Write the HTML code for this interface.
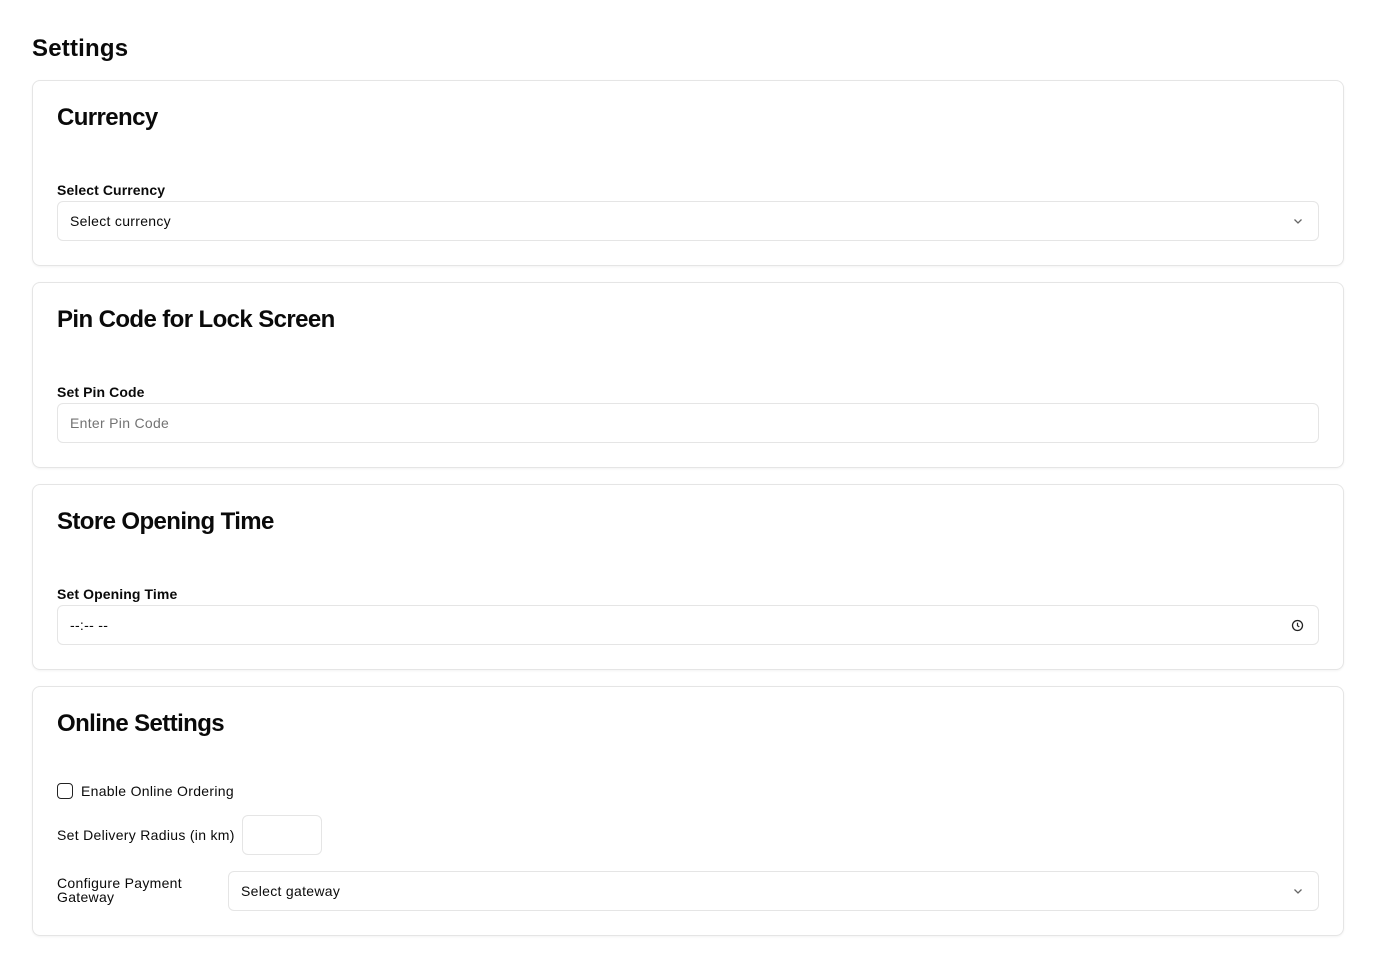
<!DOCTYPE html>
<html><head><style>
*{box-sizing:border-box;margin:0;padding:0}
body{width:1376px;height:968px;background:#fff;font-family:"Liberation Sans",Arial,sans-serif;color:#0a0a0a;position:relative;overflow:hidden}
.a{position:absolute}
h1{position:absolute;left:32px;top:35px;font-size:24px;font-weight:700;letter-spacing:0.2px}
.card{position:absolute;left:32px;width:1312px;border:1px solid #e5e5e5;border-radius:8px;box-shadow:0 1px 2px rgba(0,0,0,.05)}
.card h2{position:absolute;left:24px;top:23px;font-size:24px;font-weight:700;letter-spacing:-0.6px}
.lab{position:absolute;left:24px;font-size:14px;font-weight:600;letter-spacing:0.1px}
.inp{position:absolute;left:24px;width:1262px;height:40px;border:1px solid #e5e5e5;border-radius:6px;font-size:14px;padding:0 12px;line-height:38px;letter-spacing:0.3px}
.ph{color:#737373}
.ic{position:absolute;right:14px;top:13px}
.t{font-size:14px;position:absolute;letter-spacing:0.3px}
</style></head><body>
<h1>Settings</h1>
<div class="card" style="top:80px;height:186px">
<h2>Currency</h2>
<div class="lab" style="top:101px">Select Currency</div>
<div class="inp" style="top:120px">Select currency<svg class="ic" width="12" height="12" viewBox="0 0 12 12"><path d="M2.5 4.5L6 8l3.5-3.5" stroke="#666" stroke-width="1.3" fill="none"/></svg></div>
</div>
<div class="card" style="top:282px;height:186px">
<h2>Pin Code for Lock Screen</h2>
<div class="lab" style="top:101px">Set Pin Code</div>
<div class="inp ph" style="top:120px">Enter Pin Code</div>
</div>
<div class="card" style="top:484px;height:186px">
<h2>Store Opening Time</h2>
<div class="lab" style="top:101px">Set Opening Time</div>
<div class="inp" style="top:120px">--:-- --<svg class="ic" width="13" height="13" viewBox="0 0 13 13"><circle cx="6.5" cy="6.5" r="5" stroke="#222" stroke-width="1.3" fill="none"/><path d="M6.5 3.8v2.9l1.8 1.2" stroke="#222" stroke-width="1.2" fill="none"/></svg></div>
</div>
<div class="card" style="top:686px;height:250px">
<h2>Online Settings</h2>
<div class="a" style="left:24px;top:96px;width:16px;height:16px;border:1.3px solid #222;border-radius:4px"></div>
<div class="t" style="left:48px;top:96px">Enable Online Ordering</div>
<div class="t" style="left:24px;top:140px">Set Delivery Radius (in km)</div>
<div class="a" style="left:209px;top:128px;width:80px;height:40px;border:1px solid #e5e5e5;border-radius:6px"></div>
<div class="t" style="left:24px;top:189px;line-height:14px">Configure Payment<br>Gateway</div>
<div class="inp" style="left:195px;width:1091px;top:184px">Select gateway<svg class="ic" width="12" height="12" viewBox="0 0 12 12"><path d="M2.5 4.5L6 8l3.5-3.5" stroke="#666" stroke-width="1.3" fill="none"/></svg></div>
</div>
</body></html>
